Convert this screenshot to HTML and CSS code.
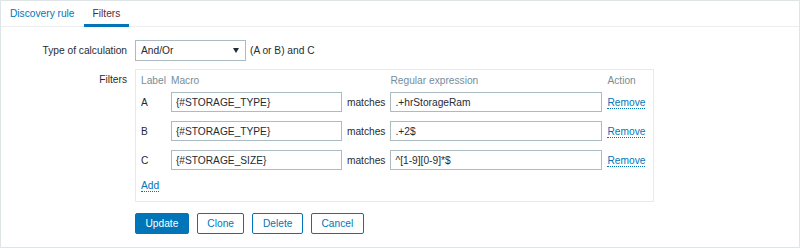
FILE: index.html
```html
<!DOCTYPE html>
<html lang="en">
<head>
    <meta charset="UTF-8">
    <title>Discovery rule - Filters</title>
    <link rel="stylesheet" href="styles.css">
</head>
<body>

<div class="page">
    <ul class="tabs">
        <li><a href="#">Discovery rule</a></li>
        <li class="active"><a href="#">Filters</a></li>
    </ul>

    <div class="form">
        <div class="form-row">
            <label class="form-label">Type of calculation</label>
            <div class="form-field inline">
                <div class="select">
                    <span>And/Or</span>
                    <svg width="6" height="5" viewBox="0 0 6 5"><path d="M0 0H6L3 5Z" fill="#1f2c33"/></svg>
                </div>
                <span class="formula">(A or B) and C</span>
            </div>
        </div>

        <div class="form-row">
            <label class="form-label top">Filters</label>
            <div class="form-field">
                <div class="filter-box">
                    <table class="filter-table">
                        <thead>
                            <tr>
                                <th>Label</th>
                                <th>Macro</th>
                                <th></th>
                                <th>Regular expression</th>
                                <th>Action</th>
                            </tr>
                        </thead>
                        <tbody>
                            <tr>
                                <td>A</td>
                                <td><input class="macro" type="text" value="{#STORAGE_TYPE}"></td>
                                <td>matches</td>
                                <td><input class="regex" type="text" value=".+hrStorageRam"></td>
                                <td><a href="#" class="link">Remove</a></td>
                            </tr>
                            <tr>
                                <td>B</td>
                                <td><input class="macro" type="text" value="{#STORAGE_TYPE}"></td>
                                <td>matches</td>
                                <td><input class="regex" type="text" value=".+2$"></td>
                                <td><a href="#" class="link">Remove</a></td>
                            </tr>
                            <tr>
                                <td>C</td>
                                <td><input class="macro" type="text" value="{#STORAGE_SIZE}"></td>
                                <td>matches</td>
                                <td><input class="regex" type="text" value="^[1-9][0-9]*$"></td>
                                <td><a href="#" class="link">Remove</a></td>
                            </tr>
                            <tr>
                                <td colspan="5"><a href="#" class="link">Add</a></td>
                            </tr>
                        </tbody>
                    </table>
                </div>
            </div>
        </div>

        <div class="form-row">
            <div></div>
            <div class="buttons">
                <button class="btn primary">Update</button>
                <button class="btn">Clone</button>
                <button class="btn">Delete</button>
                <button class="btn">Cancel</button>
            </div>
        </div>
    </div>
</div>

</body>
</html>
```

FILE: styles.css
```css
body {
    margin: 0;
    background-color: #ffffff;
    font-family: "Liberation Sans", Arial, sans-serif;
    font-size: 10.2px;
    line-height: 13px;
    color: #1f2c33;
}
.page {
    height: 248px;
    box-sizing: border-box;
    border: 1px solid #dfe4e7;
    background-color: #ffffff;
}
.tabs {
    display: flex;
    margin: 0;
    padding: 0;
    list-style: none;
    height: 25px;
    border-bottom: 1px solid #ebeef0;
}
.tabs li {
    display: flex;
    align-items: center;
    padding: 0 9px;
}
.tabs a {
    color: #0275b8;
    text-decoration: none;
}
.tabs li.active {
    border-bottom: 3px solid #0275b8;
    margin-bottom: -1px;
    padding-top: 2px;
}
.tabs li.active a {
    color: #5a2b2e;
}
.form {
    display: flex;
    flex-direction: column;
    gap: 8px;
    padding-top: 13px;
}
.form-row {
    display: grid;
    grid-template-columns: 126px auto;
    column-gap: 8px;
    align-items: center;
}
.form-label {
    text-align: right;
}
.form-label.top {
    align-self: start;
    padding-top: 4px;
}
.form-field.inline {
    display: flex;
    align-items: center;
}
.select {
    width: 111px;
    height: 21px;
    box-sizing: border-box;
    border: 1px solid #acbbc2;
    padding: 0 6px 0 5px;
    display: flex;
    align-items: center;
    justify-content: space-between;
}
.formula {
    margin-left: 4px;
}
.filter-box {
    width: 519px;
    box-sizing: border-box;
    border: 1px solid #e6eaec;
    padding: 4px 0 0 5px;
}
.filter-table {
    border-collapse: collapse;
    border-spacing: 0;
}
.filter-table th {
    font-weight: normal;
    color: #768d99;
    text-align: left;
    padding: 0 5px 5px 0;
}
.filter-table td {
    padding: 0 5px 9px 0;
    white-space: nowrap;
}
.filter-table input {
    height: 20px;
    box-sizing: border-box;
    border: 1px solid #acbbc2;
    padding: 0 4px;
    margin: 0;
    font-family: inherit;
    font-size: 10.2px;
    color: #1f2c33;
    display: block;
}
.filter-table input.macro {
    width: 171px;
}
.filter-table input.regex {
    width: 212px;
}
.link {
    color: #0275b8;
    text-decoration: none;
    border-bottom: 1px dotted #0275b8;
}
.buttons {
    display: flex;
    gap: 8px;
    margin-top: 3px;
}
.btn {
    height: 21px;
    padding: 0 9.5px;
    border: 1px solid #0275b8;
    border-radius: 2px;
    background-color: #ffffff;
    color: #0275b8;
    font-family: inherit;
    font-size: 10.2px;
    cursor: pointer;
}
.btn.primary {
    background-color: #0275b8;
    color: #ffffff;
}
```
